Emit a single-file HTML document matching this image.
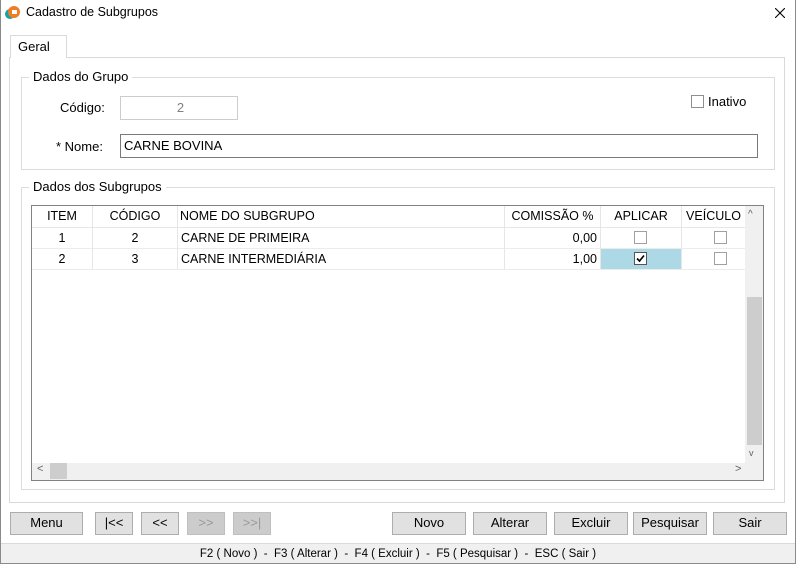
<!DOCTYPE html>
<html><head><meta charset="utf-8"><style>
*{box-sizing:border-box;margin:0;padding:0}
body{width:796px;height:564px;background:#fff;font-family:"Liberation Sans",sans-serif;font-size:13px;color:#000;position:relative;overflow:hidden}
.a{position:absolute}
.win{left:0;top:0;width:796px;height:564px;border:1px solid #8a8a8a;border-top:none}
.grp{border:1px solid #dcdcdc}
.leg{background:#fff;padding:0 4px;font-size:13px;color:#000}
.inp{border:1px solid #7a7a7a;background:#fff;padding-left:3px;line-height:21px}
.btn{background:#e1e1e1;border:1px solid #adadad;text-align:center;line-height:20px;font-size:13px}
.dis{color:#9a9a9a;background:#cccccc;border-color:#bfbfbf}
.cell{position:absolute;line-height:21px;font-size:12.5px;white-space:nowrap}
.cb{position:absolute;width:13px;height:13px;border:1px solid #8f8f8f;background:#fff}
</style></head><body>
<div class="a win"></div>
<svg class="a" style="left:4px;top:5px" width="16" height="16"><circle cx="6" cy="9" r="5" fill="#17a0a8"/><circle cx="10" cy="7" r="6" fill="#f07d22"/><rect x="8" y="5" width="5" height="4" fill="#fff"/></svg>
<div class="a" style="left:26px;top:5px;font-size:12.5px">Cadastro de Subgrupos</div>
<svg class="a" style="left:775px;top:8px" width="10" height="10"><path d="M0 0L10 10M10 0L0 10" stroke="#000" stroke-width="1.1"/></svg>
<div class="a" style="left:9px;top:57px;width:776px;height:446px;border:1px solid #d9d9d9"></div>
<div class="a" style="left:10px;top:35px;width:57px;height:23px;border:1px solid #d9d9d9;border-bottom:none;background:#fff;padding:3px 0 0 7px">Geral</div>
<div class="a grp" style="left:21px;top:77px;width:754px;height:93px"></div>
<div class="a leg" style="left:29px;top:69px">Dados do Grupo</div>
<div class="a" style="left:60px;top:100px">Código:</div>
<div class="a inp" style="left:120px;top:96px;width:118px;height:24px;border-color:#cccccc;color:#808080;text-align:center">2</div>
<div class="cb" style="left:691px;top:95px"></div>
<div class="a" style="left:708px;top:94px">Inativo</div>
<div class="a" style="left:56px;top:139px">* Nome:</div>
<div class="a inp" style="left:120px;top:134px;width:638px;height:24px">CARNE BOVINA</div>
<div class="a grp" style="left:21px;top:187px;width:754px;height:303px"></div>
<div class="a leg" style="left:29px;top:179px">Dados dos Subgrupos</div>
<div class="a" style="left:31px;top:205px;width:733px;height:276px;border:1px solid #828282;background:#fff"></div>
<div class="a" style="left:32px;top:227px;width:713px;height:1px;background:#e6e6e6"></div>
<div class="a" style="left:32px;top:248px;width:713px;height:1px;background:#ececec"></div>
<div class="a" style="left:32px;top:269px;width:713px;height:1px;background:#ececec"></div>
<div class="a" style="left:92px;top:206px;width:1px;height:63px;background:#e6e6e6"></div>
<div class="a" style="left:177px;top:206px;width:1px;height:63px;background:#e6e6e6"></div>
<div class="a" style="left:504px;top:206px;width:1px;height:63px;background:#e6e6e6"></div>
<div class="a" style="left:600px;top:206px;width:1px;height:63px;background:#e6e6e6"></div>
<div class="a" style="left:681px;top:206px;width:1px;height:63px;background:#e6e6e6"></div>
<div class="cell" style="left:32px;top:206px;width:60px;text-align:center">ITEM</div>
<div class="cell" style="left:93px;top:206px;width:84px;text-align:center">CÓDIGO</div>
<div class="cell" style="left:180px;top:206px">NOME DO SUBGRUPO</div>
<div class="cell" style="left:505px;top:206px;width:95px;text-align:center">COMISSÃO %</div>
<div class="cell" style="left:601px;top:206px;width:80px;text-align:center">APLICAR</div>
<div class="cell" style="left:682px;top:206px;width:63px;text-align:center">VEÍCULO</div>
<div class="cell" style="left:32px;top:228px;width:60px;text-align:center">1</div>
<div class="cell" style="left:93px;top:228px;width:84px;text-align:center">2</div>
<div class="cell" style="left:181px;top:228px">CARNE DE PRIMEIRA</div>
<div class="cell" style="left:505px;top:228px;width:92px;text-align:right">0,00</div>
<div class="cb" style="left:634px;top:231px;border-color:#a0a0a0"></div>
<div class="cb" style="left:714px;top:231px;border-color:#a0a0a0"></div>
<div class="cell" style="left:32px;top:249px;width:60px;text-align:center">2</div>
<div class="cell" style="left:93px;top:249px;width:84px;text-align:center">3</div>
<div class="cell" style="left:181px;top:249px">CARNE INTERMEDIÁRIA</div>
<div class="cell" style="left:505px;top:249px;width:92px;text-align:right">1,00</div>
<div class="a" style="left:601px;top:249px;width:80px;height:20px;background:#add8e6"></div>
<div class="cb" style="left:634px;top:252px;border-color:#555"><svg width="11" height="11" style="position:absolute;left:0;top:0"><path d="M2 5.5 L4.5 8 L9 2.5" stroke="#000" stroke-width="1.6" fill="none"/></svg></div>
<div class="cb" style="left:714px;top:252px;border-color:#a0a0a0"></div>
<div class="a" style="left:745px;top:206px;width:18px;height:257px;background:#f0f0f0"></div>
<div class="a" style="left:748px;top:209px;font-size:10px;color:#606060">^</div>
<div class="a" style="left:747px;top:297px;width:15px;height:148px;background:#cdcdcd"></div>
<div class="a" style="left:749px;top:448px;font-size:9px;color:#606060">v</div>
<div class="a" style="left:32px;top:463px;width:713px;height:17px;background:#f0f0f0"></div>
<div class="a" style="left:37px;top:463px;font-size:11px;color:#606060">&lt;</div>
<div class="a" style="left:50px;top:463px;width:17px;height:16px;background:#cdcdcd"></div>
<div class="a" style="left:735px;top:463px;font-size:11px;color:#606060">&gt;</div>
<div class="a" style="left:745px;top:463px;width:18px;height:17px;background:#f0f0f0"></div>
<div class="a btn" style="left:10px;top:512px;width:73px;height:23px">Menu</div>
<div class="a btn" style="left:95px;top:512px;width:38px;height:23px">|&lt;&lt;</div>
<div class="a btn" style="left:141px;top:512px;width:38px;height:23px">&lt;&lt;</div>
<div class="a btn dis" style="left:187px;top:512px;width:38px;height:23px">&gt;&gt;</div>
<div class="a btn dis" style="left:233px;top:512px;width:38px;height:23px">&gt;&gt;|</div>
<div class="a btn" style="left:392px;top:512px;width:74px;height:23px">Novo</div>
<div class="a btn" style="left:473px;top:512px;width:74px;height:23px">Alterar</div>
<div class="a btn" style="left:554px;top:512px;width:74px;height:23px">Excluir</div>
<div class="a btn" style="left:633px;top:512px;width:74px;height:23px">Pesquisar</div>
<div class="a btn" style="left:713px;top:512px;width:74px;height:23px">Sair</div>
<div class="a" style="left:1px;top:543px;width:794px;height:20px;background:#f0f0f0;border-top:1px solid #dadada;text-align:center;font-size:11.5px;line-height:20px">F2 ( Novo )&nbsp; - &nbsp;F3 ( Alterar )&nbsp; - &nbsp;F4 ( Excluir )&nbsp; - &nbsp;F5 ( Pesquisar )&nbsp; - &nbsp;ESC ( Sair )</div>
</body></html>
